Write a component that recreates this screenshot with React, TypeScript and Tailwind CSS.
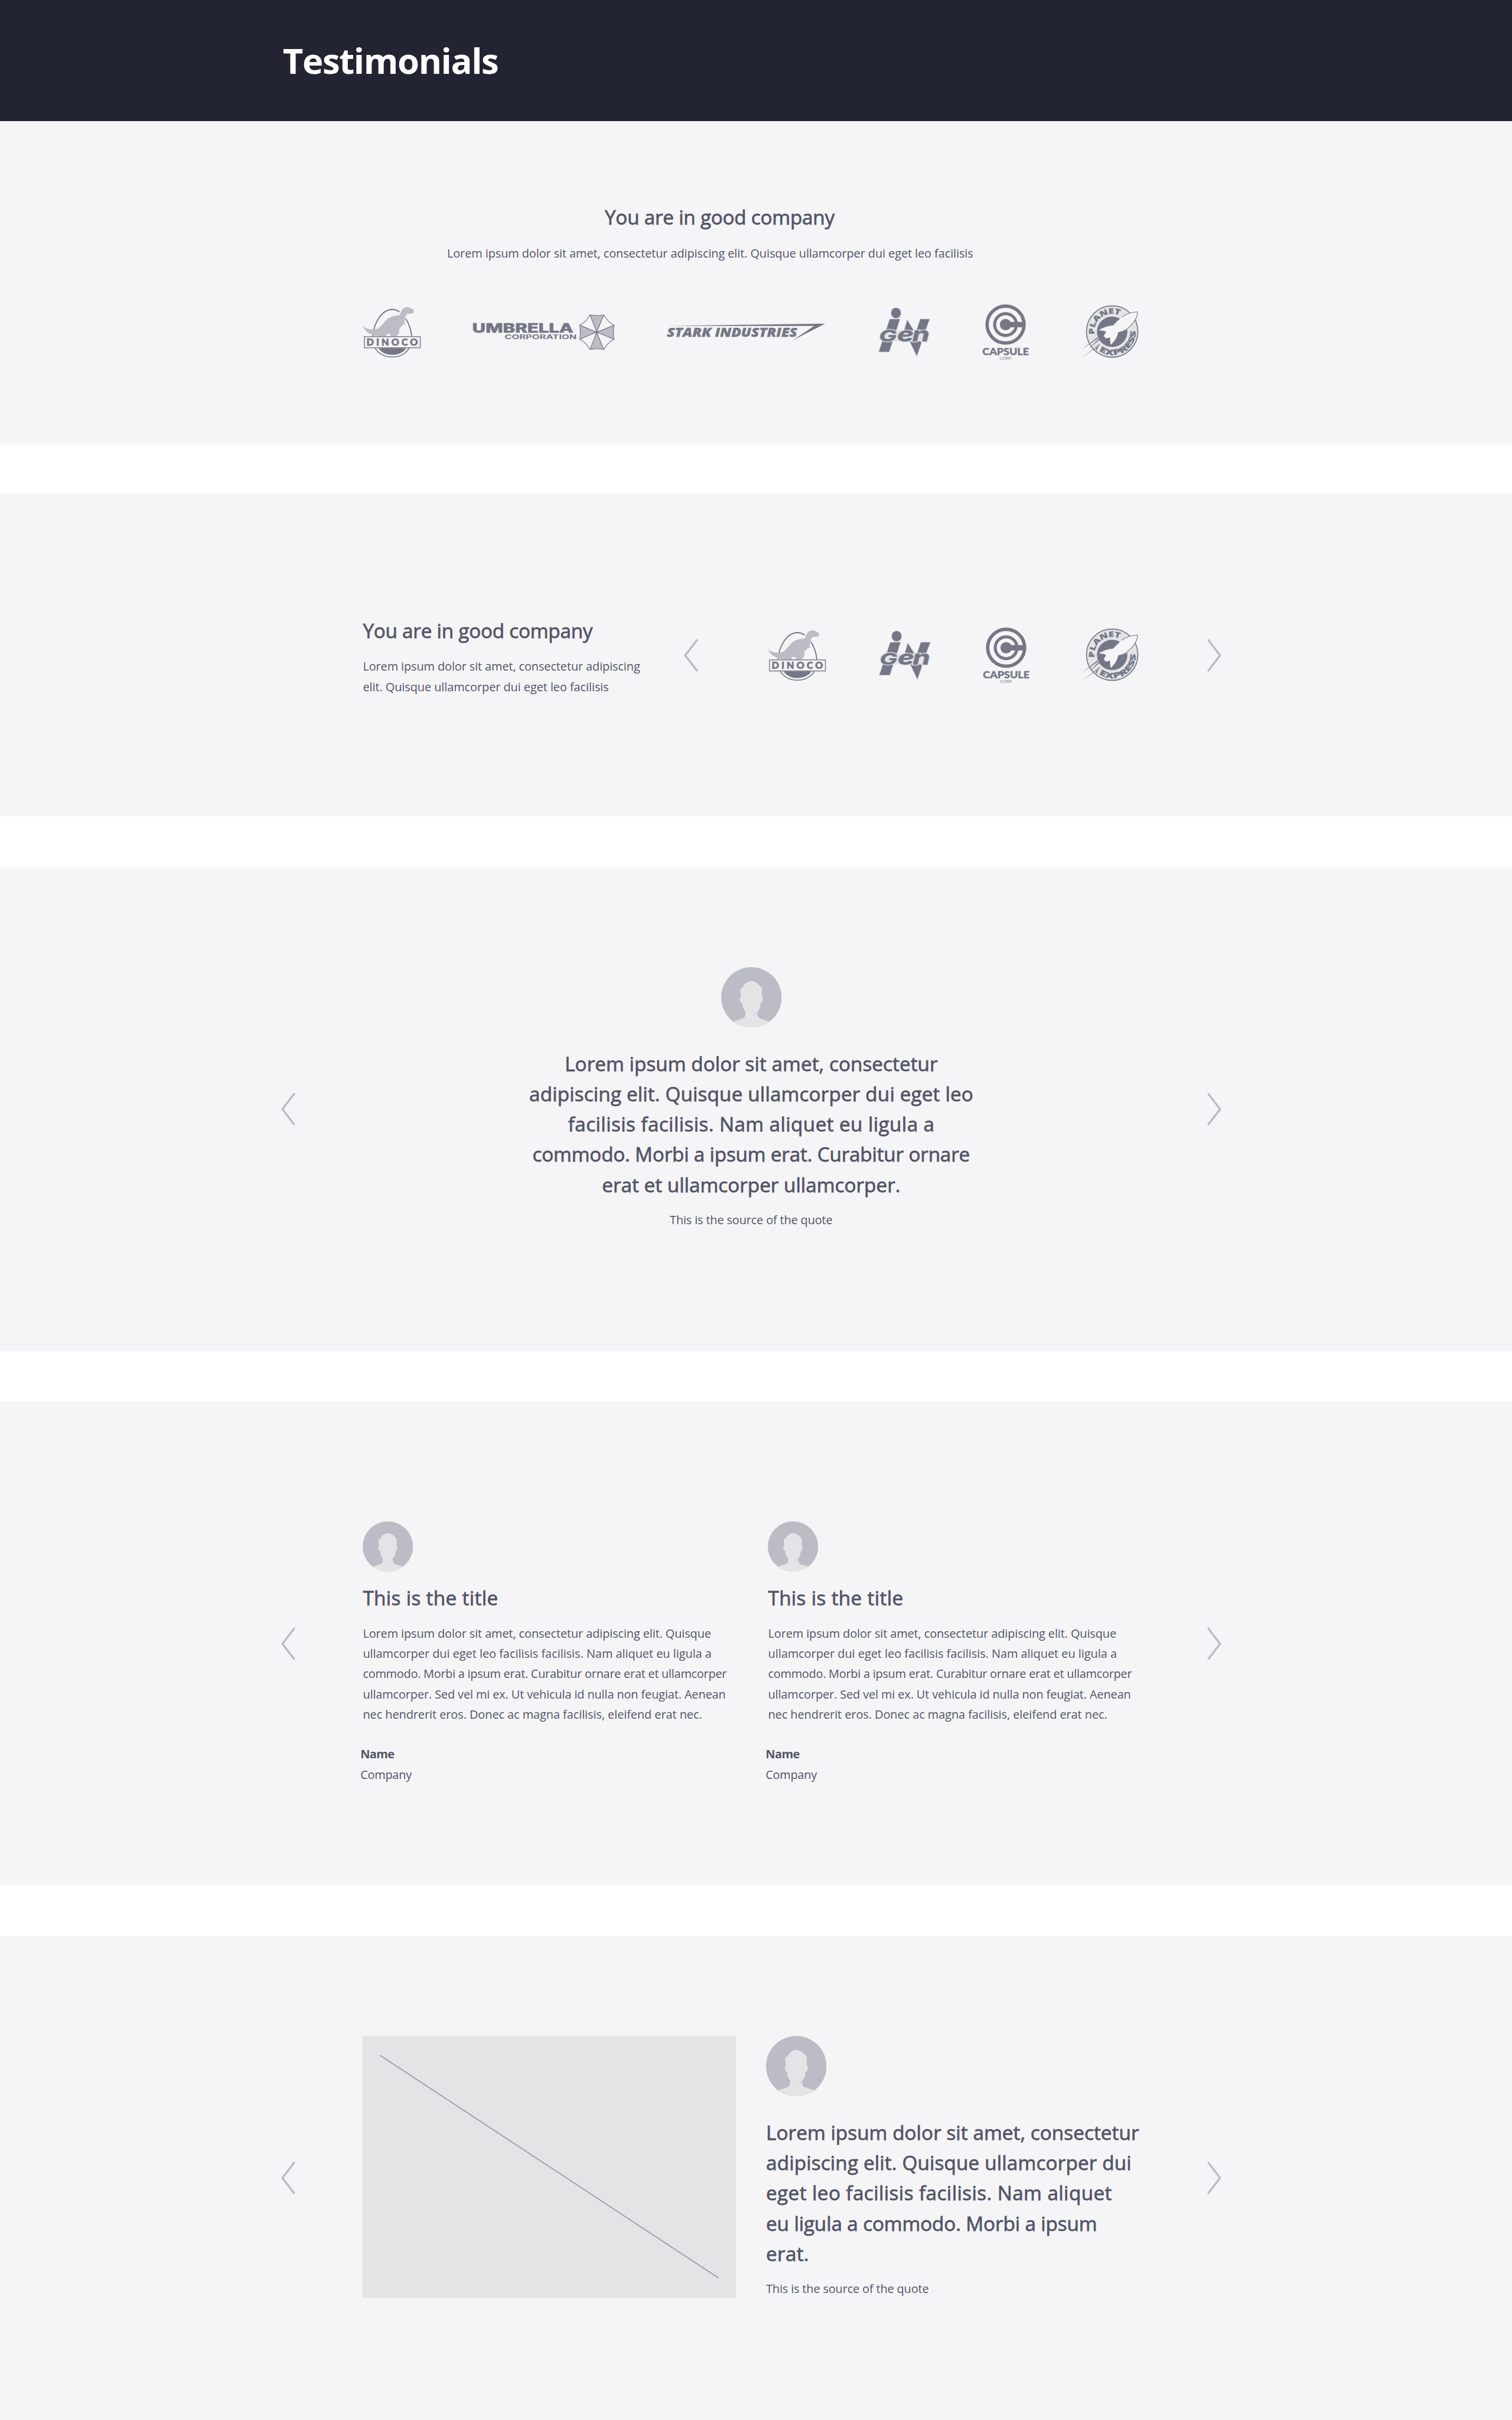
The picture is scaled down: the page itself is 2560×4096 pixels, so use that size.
import React, { useLayoutEffect, useRef, useState } from "react";

const INK = "#757786";
const SOFT = "#bbbcc5";
const PALE = "#e2e4e6";
const PAPER = "#f5f5f7";

/* One typeset line whose tracking is computed so that it fills its measure. */
function Line({ w, children, className = "" }: { w: number; children: string; className?: string }) {
  const box = useRef<HTMLDivElement>(null);
  const text = useRef<HTMLSpanElement>(null);
  const [tracking, setTracking] = useState(0);

  useLayoutEffect(() => {
    if (!box.current || !text.current) return;
    text.current.style.letterSpacing = "0px";
    const k = box.current.getBoundingClientRect().width / w;
    const natural = text.current.getBoundingClientRect().width / k;
    const next = (w - natural) / (children.length - 1);
    text.current.style.letterSpacing = `${next}px`;
    setTracking(next);
  }, [w, children]);

  return (
    <div ref={box} className={`shrink-0 whitespace-nowrap ${className}`} style={{ width: w }}>
      <span ref={text} style={{ letterSpacing: `${tracking}px` }}>
        {children}
      </span>
    </div>
  );
}

const BODY = "text-[23.4px] leading-[40px]";
const HEAD = "text-[39px] leading-[60px] font-medium [-webkit-text-stroke:0.9px_#535467]";

function Chevron({ dir }: { dir: "left" | "right" }) {
  return (
    <button aria-label={dir === "left" ? "Previous" : "Next"} className="h-16 w-7 shrink-0 self-center">
      <svg viewBox="0 0 28 64" className="block h-16 w-7" fill="none" stroke="#b9bcc7" strokeWidth="4" strokeLinecap="round" strokeLinejoin="round">
        <path d={dir === "left" ? "M25.5 2 2.5 32l23 30" : "M2.5 2l23 30-23 30"} />
      </svg>
    </button>
  );
}

function Avatar({ className }: { className: string }) {
  return (
    <svg viewBox="30 30 360 360" className={`block shrink-0 ${className}`}>
      <clipPath id="avatarDisc">
        <circle cx="210" cy="210" r="180" />
      </clipPath>
      <g clipPath="url(#avatarDisc)">
        <rect x="30" y="30" width="360" height="360" fill={SOFT} />
        <path d="M174 285v25c0 14-6 20-20 27l-54 17v46h220v-46l-54-17c-14-7-20-13-20-27v-25z" fill={PALE} />
        <path d="M176 290c10 16 22 26 36 26s24-8 34-24l-1 10c-8 10-20 15-32 15s-26-9-37-24z" fill="#cdd2d8" />
        <path d="M161 150c-1-6 2-11 8-16 12-12 25-21 41-21 17 0 29 9 41 19l21 22c2 14 0 35 1 52 7 5 8 17 2 28-2 6-5 9-10 10-1 22-5 36-15 46-12 13-24 21-40 21s-30-9-41-23c-9-11-12-24-13-44-6-2-9-5-11-10-5-10-6-20 2-27 1-20-4-28-3-43 2-8 8-12 17-14z" fill={PALE} />
      </g>
    </svg>
  );
}

function Dinoco() {
  return (
    <svg viewBox="60 0 350 420" className="block h-[140px] w-[116.67px] shrink-0">
      <path d="M121 234C124 160 170 75 236 73c16 0 30 5 43 15M317 128c20 32 32 70 35 106" fill="none" stroke={INK} strokeWidth="6.5" />
      <path d="M134 303c22 36 60 53 102 53s80-18 101-53" fill="none" stroke={INK} strokeWidth="6" />
      <path d="M154 303h166c-20 28-49 40-84 40s-64-12-82-40z" fill={INK} />
      <path d="M61 165c7 16 27 25 50 27 22 1 38-2 51-14 21-19 34-41 53-54 20-13 43-14 66-18 6-20 15-38 30-44 14-4 30-2 37 5 10 2 16 8 17 16 0 8-2 12-8 13-9 3-17 3-28 3-5 0-8 4-11 11-5 12-5 22-8 34l-4 8 8 3-2 2 4 3-3 2 2 6-5-5-11-1c-4 11-11 16-20 21l-1 26c-3 10-11 18-16 21 6 2 9 5 9 10h-46l3-5-2-7 5-5c-8-2-15-5-22-7-5 4-8 7-9 12l8 5 3 9h-25l-5-10c-24 0-50-1-70-10-28-13-46-32-50-60z" fill={SOFT} />
      <rect x="70" y="235" width="333" height="66" fill={PAPER} stroke={INK} strokeWidth="5" />
      <text x="83" y="288" fontFamily="Lato" fontWeight="800" fontSize="58" textLength="306" fill={INK} stroke={INK} strokeWidth="1.5">DINOCO</text>
    </svg>
  );
}

function Umbrella() {
  return (
    <svg viewBox="48 0 855 360" className="ml-[99.33px] block h-[120px] w-[285px] shrink-0">
      <text x="50" y="179" fontFamily="Inter" fontWeight="800" fontSize="74" textLength="602" lengthAdjust="spacingAndGlyphs" fill={INK} stroke={INK} strokeWidth="2">UMBRELLA</text>
      <text x="242" y="219" fontFamily="Inter" fontWeight="700" fontSize="38" textLength="430" lengthAdjust="spacingAndGlyphs" fill={INK}>CORPORATION</text>
      <g stroke={INK} strokeWidth="4" strokeLinejoin="round">
        <path d="M751 74q41 8 82 0-42 103-42 103zM833 280q-41-8-82 0l40-103zM894 135q-6 42 0 84l-103-42zM690 219q6-42 0-84l101 42z" fill={SOFT} />
        <path d="M833 74q24 42 61 61l-103 42zM894 219q-37 19-61 61l-42-103zM751 280q-24-42-61-61l101-42zM690 135q37-19 61-61l40 103z" fill={PAPER} />
      </g>
      <circle cx="791" cy="177" r="7" fill={INK} />
    </svg>
  );
}

function Stark() {
  return (
    <svg viewBox="66 -30 951 360" className="ml-[101px] block h-[120px] w-[317px] shrink-0">
      <path d="M72 109L1012 96 816 197 946 110z" fill={INK} />
      <text x="70" y="174" fontFamily="Open Sans" fontWeight="800" fontStyle="italic" fontSize="75" textLength="776" lengthAdjust="spacingAndGlyphs" fill={INK} stroke={INK} strokeWidth="1.5">STARK INDUSTRIES</text>
    </svg>
  );
}

function InGen() {
  return (
    <svg viewBox="66 0 315 420" className="block h-[140px] w-[105px] shrink-0">
      <g fill={INK} stroke={PALE} strokeWidth="8" paintOrder="stroke" strokeLinejoin="miter">
        <ellipse cx="175" cy="94" rx="29" ry="31" />
        <path d="M138 131h60L134 325H73zM242 136L326 272 299 350 225 195zM320 131h55l-25 66h-52z" />
        <path d="M100 197h262l-12 66H100z" fill={PALE} stroke="none" />
        <text x="74" y="263" fontFamily="Inter" fontWeight="800" fontStyle="italic" fontSize="94" textLength="106" lengthAdjust="spacingAndGlyphs">G</text>
        <text x="181" y="264" fontFamily="Inter" fontWeight="800" fontStyle="italic" fontSize="120" textLength="100" lengthAdjust="spacingAndGlyphs">e</text>
        <text x="271" y="264" fontFamily="Inter" fontWeight="800" fontStyle="italic" fontSize="120" textLength="104" lengthAdjust="spacingAndGlyphs">n</text>
      </g>
    </svg>
  );
}

function Capsule() {
  return (
    <svg viewBox="687 0 279 420" className="block h-[140px] w-[93px] shrink-0">
      <g fill="none" stroke={INK}>
        <circle cx="826" cy="163" r="110" strokeWidth="20" />
        <circle cx="826" cy="163" r="65" strokeWidth="18" />
      </g>
      <circle cx="826" cy="163" r="34" fill={INK} />
      <path d="M845 147h99v32h-99z" fill={INK} />
      <text x="688" y="346" fontFamily="Lato" fontWeight="900" fontSize="58" stroke={INK} strokeWidth="1.5" textLength="277" lengthAdjust="spacingAndGlyphs" fill={INK}>CAPSULE</text>
      <text x="790" y="371" fontFamily="Liberation Sans" fontSize="25" textLength="74" lengthAdjust="spacingAndGlyphs" fill={INK}>CORP.</text>
    </svg>
  );
}

function PlanetExpress() {
  return (
    <svg viewBox="75 0 345 420" className="block h-[140px] w-[115px] shrink-0">
      <defs>
        <path id="planetArc" d="M157 221A105.5 105.5 0 0 1 316 114" />
        <path id="expressArc" d="M184 319A138 138 0 0 0 399 181" />
      </defs>
      <circle cx="261.5" cy="204.5" r="153" fill={PALE} stroke={INK} strokeWidth="6" />
      <circle cx="261.5" cy="205.5" r="90.5" fill={INK} />
      <g fontFamily="Open Sans" fontWeight="800" fontSize="45" fill={INK} stroke={INK} strokeWidth="1">
        <text textLength="228" lengthAdjust="spacingAndGlyphs">
          <textPath href="#planetArc">PLANET</textPath>
        </text>
        <text textLength="306" lengthAdjust="spacingAndGlyphs">
          <textPath href="#expressArc">EXPRESS</textPath>
        </text>
      </g>
      <path d="M174 238L80 311l97-66zM181 249l-61 59 66-54zM190 277L78 362l108-76z" fill={INK} />
      <path d="M186 274l-24 36 8 6z" fill={INK} />
      <path d="M182 196C205 182 235 171 268 168 300 130 350 92 408 87c6 0 5 9 3 18C396 155 355 200 298 208c-8 32-23 57-46 75l-4-43-24 5-13-15 13-20-2-7c-12-4-27-5-40-7z" fill={PAPER} />
      <path d="M320 117C348 98 380 89 408 87c6 0 5 9 3 18-8 28-31 60-61 83" fill="none" stroke={INK} strokeWidth="4" />
    </svg>
  );
}

function Quote({ lines, center }: { lines: [string, number][]; center?: boolean }) {
  return (
    <blockquote className={`mt-[42px] flex flex-col ${HEAD} ${center ? "items-center" : "items-start"}`}>
      {lines.map(([t, w]) => (
        <Line key={t} w={w}>{t}</Line>
      ))}
    </blockquote>
  );
}

const CARD_LINES: [string, number][] = [
  ["Lorem ipsum dolor sit amet, consectetur adipiscing elit. Quisque", 691],
  ["ullamcorper dui eget leo facilisis facilisis. Nam aliquet eu ligula a", 692],
  ["commodo. Morbi a ipsum erat. Curabitur ornare erat et ullamcorper", 722],
  ["ullamcorper. Sed vel mi ex. Ut vehicula id nulla non feugiat. Aenean", 720],
  ["nec hendrerit eros. Donec ac magna facilisis, eleifend erat nec.", 673],
];

function Card() {
  return (
    <article className="w-[804px] shrink-0">
      <Avatar className="h-[100px] w-[100px]" />
      <Line w={268} className={`mt-[21px] ${HEAD}`}>This is the title</Line>
      <div className={`mt-[21.5px] ${BODY}`}>
        {CARD_LINES.map(([t, w]) => (
          <Line key={t} w={w}>{t}</Line>
        ))}
      </div>
      <div className={`-ml-[5px] mt-[39.5px] ${BODY}`}>
        <Line w={68} className="font-bold">Name</Line>
        <Line w={102}>Company</Line>
      </div>
    </article>
  );
}

export default function App() {
  return (
    <main className="flex h-[4800px] w-[3000px] flex-col gap-[100px] overflow-hidden bg-white font-['Open_Sans',sans-serif] text-[#535467] [zoom:0.853333]">
      <div className="shrink-0">
        <header className="h-[240px] bg-[#222431] pl-[561px] pt-[69px] text-[70px] font-bold leading-[100px] text-white">
          <Line w={429}>Testimonials</Line>
        </header>
        <section className="h-[640px] bg-[#f5f5f7] pt-[161px]">
          <Line w={456} className={`ml-[1200px] ${HEAD}`}>You are in good company</Line>
          <Line w={1044} className={`ml-[887px] mt-[21.5px] ${BODY}`}>
            Lorem ipsum dolor sit amet, consectetur adipiscing elit. Quisque ullamcorper dui eget leo facilisis
          </Line>
          <div className="ml-[720px] mt-[67.5px] flex items-center">
            <Dinoco />
            <Umbrella />
            <Stark />
            <div className="ml-[102.5px] flex w-[518.5px] justify-between">
              <InGen />
              <Capsule />
              <PlanetExpress />
            </div>
          </div>
        </section>
      </div>

      <section className="flex h-[640px] shrink-0 bg-[#f5f5f7] pl-[720px]">
        <div className="w-[637px] shrink-0 pt-[241px]">
          <Line w={456} className={HEAD}>You are in good company</Line>
          <div className={`mt-[21.5px] ${BODY}`}>
            <Line w={550}>Lorem ipsum dolor sit amet, consectetur adipiscing</Line>
            <Line w={488}>elit. Quisque ullamcorper dui eget leo facilisis</Line>
          </div>
        </div>
        <Chevron dir="left" />
        <div className="ml-[139px] flex w-[736px] shrink-0 items-center justify-between">
          <Dinoco />
          <InGen />
          <Capsule />
          <PlanetExpress />
        </div>
        <div className="w-[135px] shrink-0" />
        <Chevron dir="right" />
      </section>

      <section className="flex h-[960px] shrink-0 justify-between bg-[#f5f5f7] pl-[558px] pr-[577px]">
        <Chevron dir="left" />
        <div className="flex flex-col items-center pt-[198px]">
          <Avatar className="h-[120px] w-[120px]" />
          <Quote
            center
            lines={[
              ["Lorem ipsum dolor sit amet, consectetur", 740],
              ["adipiscing elit. Quisque ullamcorper dui eget leo", 881],
              ["facilisis facilisis. Nam aliquet eu ligula a", 727],
              ["commodo. Morbi a ipsum erat. Curabitur ornare", 868],
              ["erat et ullamcorper ullamcorper.", 592],
            ]}
          />
          <Line w={323} className={`mt-5 ${BODY}`}>This is the source of the quote</Line>
        </div>
        <Chevron dir="right" />
      </section>

      <section className="flex h-[960px] shrink-0 bg-[#f5f5f7] pl-[558px]">
        <Chevron dir="left" />
        <div className="ml-[134px] flex w-[1675px] shrink-0 pt-[238px]">
          <Card />
          <Card />
        </div>
        <Chevron dir="right" />
      </section>

      <section className="flex h-[960px] shrink-0 bg-[#f5f5f7] pl-[558px]">
        <Chevron dir="left" />
        <div className="ml-[134px] flex w-[1675px] shrink-0 gap-[60px] pt-[198px]">
          <svg viewBox="0 0 740 520" className="block h-[520px] w-[740px] shrink-0 bg-[#e2e4e6]">
            <path d="M34 38L706 480" stroke="#979aa3" strokeWidth="2" />
          </svg>
          <div>
            <Avatar className="h-[120px] w-[120px]" />
            <Quote
              lines={[
                ["Lorem ipsum dolor sit amet, consectetur", 740],
                ["adipiscing elit. Quisque ullamcorper dui", 725],
                ["eget leo facilisis facilisis. Nam aliquet", 686],
                ["eu ligula a commodo. Morbi a ipsum", 657],
                ["erat.", 85],
              ]}
            />
            <Line w={323} className={`mt-5 ${BODY}`}>This is the source of the quote</Line>
          </div>
        </div>
        <Chevron dir="right" />
      </section>
    </main>
  );
}
